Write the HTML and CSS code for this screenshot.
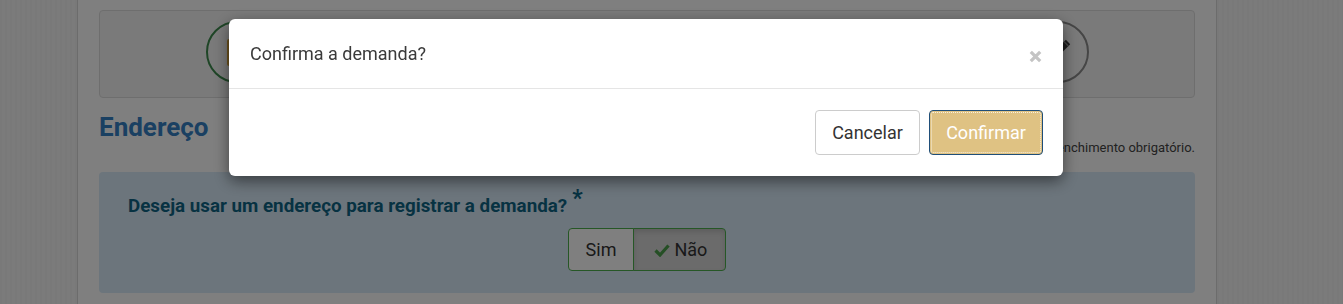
FILE: index.html
```html
<!DOCTYPE html>
<html lang="pt-BR">
<head>
<meta charset="utf-8">
<title>Confirma a demanda</title>
<link rel="stylesheet" href="styles.css">
</head>
<body>
<div class="page">
  <aside class="side side-left"></aside>
  <main class="main">
    <div class="steps">
      <div class="step step-done"><span class="step-doc"></span></div>
      <div class="step step-edit">
        <svg class="pencil" viewBox="0 0 24 24" width="26" height="26"><path d="M3 21l1.2-5.2L16.5 3.5l4 4L8.2 19.8z" fill="#3a3a3a"/><path d="M14.8 5.2l4 4" stroke="#8c8c8c" stroke-width="1.2"/></svg>
      </div>
    </div>
    <div class="section-head">
      <h2 class="section-title">Endereço</h2>
      <p class="req">* Campos de preenchimento obrigatório.</p>
    </div>
    <div class="alert">
      <p class="question">Deseja usar um endereço para registrar a demanda?<span class="star">*</span></p>
      <div class="btn-group">
        <button class="opt">Sim</button>
        <button class="opt opt-active"><svg class="check" viewBox="0 0 16 14" width="16" height="14"><path d="M1.5 7.5l4.5 4.5 8.5-9.5" fill="none" stroke="#4a9e4a" stroke-width="3.2"/></svg>Não</button>
      </div>
    </div>
  </main>
  <aside class="side side-right"></aside>
</div>
<div class="backdrop"></div>
<div class="modal">
  <div class="modal-header">
    <h4 class="modal-title">Confirma a demanda?</h4>
    <button class="close" aria-label="Fechar"><svg viewBox="0 0 13 13" width="13" height="13"><path d="M1.8 1.8l9.4 9.4M11.2 1.8l-9.4 9.4" stroke="#c4c4c4" stroke-width="3.2"/></svg></button>
  </div>
  <div class="modal-footer">
    <button class="btn btn-default">Cancelar</button>
    <button class="btn btn-primary">Confirmar</button>
  </div>
</div>
</body>
</html>
```
FILE: styles.css
```css
* { box-sizing: border-box; }
html, body { margin: 0; padding: 0; }
body {
  font-family: Roboto, "Liberation Sans", Arial, sans-serif;
  color: #333;
  background: #fff;
  width: 1343px;
  height: 304px;
  overflow: hidden;
}
.page {
  display: flex;
  height: 304px;
}
.side {
  background: repeating-linear-gradient(90deg, #f2f2f2 0 2px, #f6f6f6 2px 5px);
}
.side-left { width: 78px; flex: none; border-right: 1px solid #d8d8d8; }
.side-right { flex: 1; border-left: 1px solid #d8d8d8; }
.main {
  width: 1138px;
  flex: none;
  padding: 10px 21px 0;
  background: #fff;
}
.steps {
  height: 88px;
  border: 1px solid #dcdcdc;
  border-radius: 4px;
  background: #f5f5f5;
  display: flex;
  justify-content: space-between;
  align-items: center;
  padding: 0 105px 0 106px;
}
.step {
  width: 62px;
  height: 62px;
  border-radius: 50%;
  border: 2px solid #8c8c8c;
  display: flex;
  align-items: center;
  justify-content: center;
  margin-top: -4px;
}
.step-done { border-color: #3d8b4d; }
.step-doc {
  width: 20px;
  height: 27px;
  background: #dba63c;
  border-radius: 2px;
}
.pencil { margin: -6px -6px 0 0; }
.section-head { margin-top: 17px; }
.section-title {
  margin: 0;
  font-size: 26px;
  line-height: 24px;
  font-weight: 700;
  color: #3580c4;
}
.req {
  margin: 0;
  text-align: right;
  font-size: 13px;
  line-height: 18px;
  color: #444;
}
.alert {
  margin-top: 15px;
  height: 121px;
  background: #d9ebf9;
  border-radius: 4px;
  padding: 22px 29px 0;
}
.question {
  margin: 0;
  font-size: 18.8px;
  line-height: 24px;
  font-weight: 700;
  color: #0f6585;
}
.star {
  font-size: 23px;
  line-height: 10px;
  margin-left: 5px;
  vertical-align: 6px;
}
.btn-group {
  display: flex;
  justify-content: center;
  margin-top: 10px;
}
.opt {
  font-family: inherit;
  font-size: 18px;
  line-height: 23px;
  height: 43px;
  padding: 9px 17px;
  color: #333;
  background: #fff;
  border: 1px solid #4cae4c;
  border-radius: 4px 0 0 4px;
  display: flex;
  align-items: center;
}
.opt-active {
  margin-left: -1px;
  background: #d6d6d6;
  border-radius: 0 4px 4px 0;
  padding: 9px 18px 9px 20px;
  box-shadow: inset 0 3px 5px rgba(0,0,0,.125);
}
.check { margin-right: 4px; }
.backdrop {
  position: fixed;
  inset: 0;
  background: rgba(0,0,0,.5);
}
.modal {
  position: fixed;
  top: 19px;
  left: 229px;
  width: 834px;
  background: #fff;
  border-radius: 6px;
  box-shadow: 0 5px 15px rgba(0,0,0,.5);
}
.modal-header {
  height: 70px;
  padding: 20px 21px;
  border-bottom: 1px solid #e5e5e5;
  display: flex;
  align-items: center;
  justify-content: space-between;
}
.modal-title {
  margin: 0;
  font-size: 18px;
  line-height: 28px;
  font-weight: 400;
  color: #3a3a3a;
}
.close {
  border: 0;
  background: none;
  padding: 0;
  margin: 6px 0 0;
  width: 13px;
  height: 13px;
  display: block;
}
.close svg { display: block; }
.modal-footer {
  padding: 21px 20px;
  display: flex;
  justify-content: flex-end;
  gap: 9px;
}
.btn {
  font-family: inherit;
  font-size: 18px;
  line-height: 25px;
  height: 45px;
  padding: 9px 0;
  border-radius: 4px;
  border: 1px solid #ccc;
  background: #fff;
  color: #333;
}
.btn-default { width: 105px; }
.btn-primary {
  width: 114px;
  background: #dfc283;
  border-color: #1f4e79;
  color: #fff;
  outline: 1px dotted rgba(255,255,255,.75);
  outline-offset: -3px;
}
```
